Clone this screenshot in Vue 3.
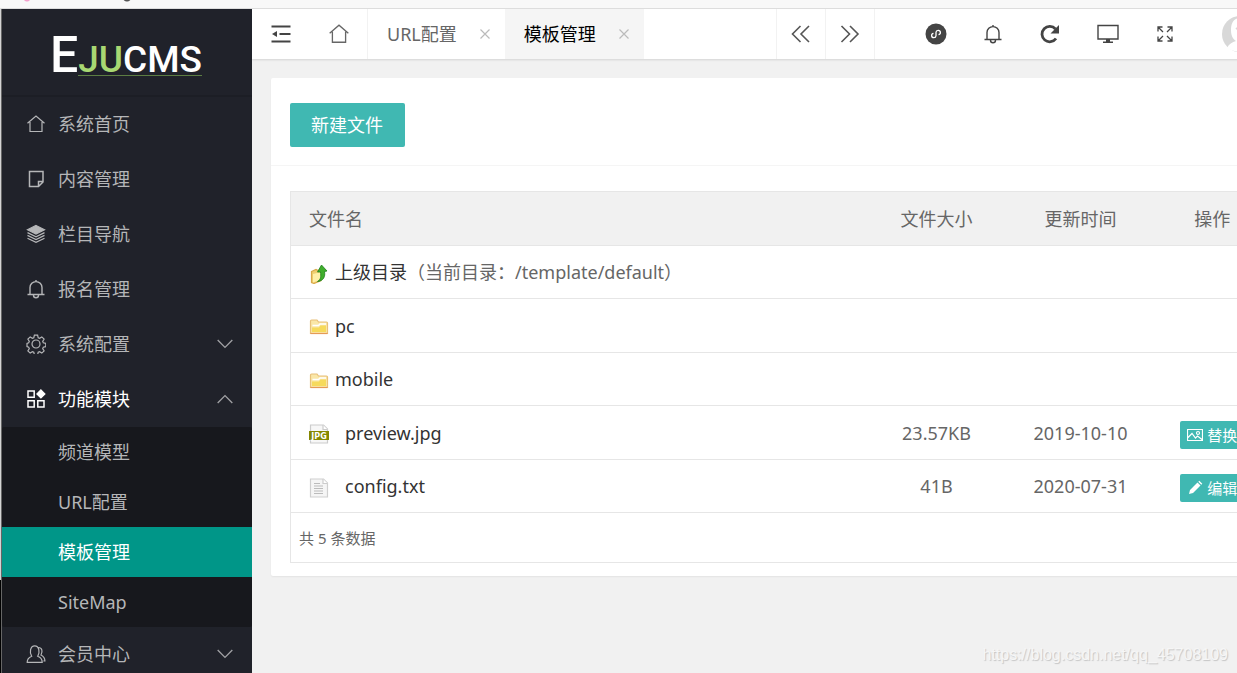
<script setup>
import { ref } from 'vue'

const icons = {
  home: '<path d="M1.500 9.300 10 2l8.500 7.300M4 8v9.500h12V8"/>',
  note: '<path d="M3.500 2.500h13.500v10.500l-4.500 4.500h-9zM12.500 17v-4.500h4.500" stroke-width="1.500"/>',
  layers: '<path d="M10 1.500 18.500 5.800 10 10 1.500 5.800z" fill="currentColor"/><path d="m1.500 8.600 8.500 4.200 8.500-4.200M1.500 11.400l8.500 4.200 8.500-4.200M1.500 14.200l8.500 4.200 8.500-4.200"/>',
  bell: '<path d="M4 15.200V8.600a6 6 0 0 1 12 0v6.600M1.500 15.500h17M10 2.500V1M7.500 16.200a2.500 2.500 0 0 0 5 0" stroke-width="1.400"/>',
  gear: '<circle cx="10" cy="10" r="4"/><path d="M8.400 1.200h3.200l.6 2.500 1.400.6 2.200-1.400 2.300 2.300-1.400 2.200.6 1.400 2.500.6v3.200l-2.500.6-.6 1.400 1.400 2.200-2.300 2.300-2.200-1.400-1.400.6-.6 2.500H8.400l-.6-2.500-1.400-.6-2.200 1.400-2.300-2.300 1.400-2.200-.6-1.400L1 12.600V9.400l1.700-.6.6-1.400-1.400-2.200 2.300-2.300 2.200 1.400 1.400-.6z"/>',
  modules: '<path d="M2 2h6.200v6.200H2zM2 11.800h6.200V18H2zM11.800 11.800H18V18h-6.200z" stroke-width="1.500"/><path d="M14.900.9l4 4-4 4-4-4z" fill="currentColor"/>',
  users: '<path d="M1.200 18.300c0-3.500 2-5 4.500-6C3.200 8.500 4.200 1.800 8.700 1.800s5.500 6.700 3 10.500c2.700 1 4.500 2.500 4.500 6zM12.500 3.500c3.500 0 4.500 4 2.500 7.500 2.500 1.200 3.900 2.800 3.900 6h-1.500"/>'
}

const menu = [
  { label: '系统首页', icon: 'home' },
  { label: '内容管理', icon: 'note' },
  { label: '栏目导航', icon: 'layers' },
  { label: '报名管理', icon: 'bell' },
  { label: '系统配置', icon: 'gear', fold: true },
  { label: '功能模块', icon: 'modules', fold: true, open: true, children: ['频道模型', 'URL配置', '模板管理', 'SiteMap'] },
  { label: '会员中心', icon: 'users', fold: true }
]
const current = ref('模板管理')
const tabs = ['URL配置', '模板管理']

const files = [
  { name: 'pc', kind: 'folder' },
  { name: 'mobile', kind: 'folder' },
  { name: 'preview.jpg', kind: 'jpg', size: '23.57KB', date: '2019-10-10', action: '替换' },
  { name: 'config.txt', kind: 'txt', size: '41B', date: '2020-07-31', action: '编辑' }
]
</script>

<template>
  <div class="page">
    <div class="browser-edge"></div>
    <div class="shell">
      <div class="window-edge"></div>
      <aside class="side">
        <a class="logo" href="#" aria-label="EJUCMS"><span class="big">E</span><span class="rest"><span class="green">JU</span>CMS</span></a>
        <nav>
          <template v-for="item in menu" :key="item.label">
            <a href="#" class="item" :class="{ open: item.open }">
              <svg class="ico" viewBox="0 0 20 20" v-html="icons[item.icon]"></svg>
              <span class="label">{{ item.label }}</span>
              <svg v-if="item.fold" class="arrow" viewBox="0 0 16 10"><path :d="item.open ? 'M1.500 8.500 8 2l6.500 6.500' : 'M1.500 1.500 8 8l6.500-6.500'" /></svg>
            </a>
            <div v-if="item.children" class="sub">
              <a v-for="c in item.children" :key="c" href="#" :class="{ on: c === current }" @click.prevent="current = c">{{ c }}</a>
            </div>
          </template>
        </nav>
      </aside>

      <div class="work">
        <header class="bar">
          <button class="cell" aria-label="折叠菜单">
            <svg class="i20" viewBox="0 0 20 20"><path d="M.5 2.500h19M8.500 10h11M.5 17.500h19" stroke-width="2.200" /><path d="M6 7v6L1 10z" fill="currentColor" stroke="none" /></svg>
          </button>
          <button class="cell home" aria-label="首页">
            <svg class="i22" viewBox="0 0 20 20" v-html="icons.home"></svg>
          </button>
          <div v-for="t in tabs" :key="t" class="tab" :class="{ active: t === current }">
            <a href="#">{{ t }}</a>
            <button :aria-label="'关闭' + t"><svg viewBox="0 0 10 10"><path d="M.5.5l9 9M9.500.5l-9 9" /></svg></button>
          </div>
          <div class="gap"></div>
          <button class="pager" aria-label="向左"><svg class="i20" viewBox="0 0 20 20"><path d="M9.500 2l-8 8 8 8M18 2l-8 8 8 8" stroke-width="1.600" /></svg></button>
          <button class="pager" aria-label="向右"><svg class="i20" viewBox="0 0 20 20"><path d="m1.500 2 8 8-8 8M10 2l8 8-8 8" stroke-width="1.600" /></svg></button>
          <div class="tools">
            <button aria-label="小程序"><svg class="i22" viewBox="0 0 22 22"><circle cx="11" cy="11" r="10.500" fill="currentColor" stroke="none" /><path d="M8.500 10.300a2.200 2.200 0 1 0 2.500 2.400V9.300a2.200 2.200 0 1 1 2.500 2.400" stroke="#fff" stroke-width="1.300" /></svg></button>
            <button aria-label="消息"><svg class="i20" viewBox="0 0 20 20" v-html="icons.bell"></svg></button>
            <button aria-label="刷新"><svg class="i20" viewBox="0 0 20 20"><path d="M16 14.500A7.700 7.700 0 1 1 15.500 5" stroke-width="2.800" /><path d="M19 1v8.500h-8.500z" fill="currentColor" stroke="none" /></svg></button>
            <button aria-label="前台"><svg class="i22" viewBox="0 0 22 22"><path d="M1 2.500h20v13.500H1z" stroke-width="1.400" /><path d="M9 16h4v2.500h3V20H6v-1.500h3z" fill="currentColor" stroke="none" /></svg></button>
            <button aria-label="全屏"><svg class="i18" viewBox="0 0 18 18"><path d="M2 6.500V2h4.500M2 2l5 5M11.500 2H16v4.500M16 2l-5 5M2 11.500V16h4.500M2 16l5-5M16 11.500V16h-4.500M16 16l-5-5" stroke-width="1.300" /></svg></button>
          </div>
          <button class="avatar" aria-label="账户"><svg viewBox="0 0 36 36"><circle cx="18" cy="18" r="18" fill="#d8d8d8" stroke="none" /><path d="M18 2C11 2 9 8 9 14c0 6 2 9 5 11-4 1-7 3-9 7 7 5 20 5 26 0-2-4-5-6-9-7 3-2 5-5 5-11 0-6-2-12-9-12z" fill="#fff" stroke="none" /><path d="M14 13l3-2 2 2" stroke="#d8d8d8" stroke-width="2" /></svg></button>
        </header>

        <main class="body">
          <section class="card">
            <div class="head"><button class="create">新建文件</button></div>
            <div class="content">
              <table>
                <colgroup><col /><col class="mid" /><col class="mid" /><col class="ops" /></colgroup>
                <thead><tr><th>文件名</th><th>文件大小</th><th>更新时间</th><th>操作</th></tr></thead>
                <tbody>
                  <tr>
                    <td>
                      <div class="file">
                        <svg class="fico" viewBox="0 0 20 20"><path d="M2.500 7.500 7 5.500l2 1 3-1v11L5 19.500l-2.500-1z" fill="#efcf70" stroke="#d9a94a" /><path d="M4 10 12 8v7.500l-8 3z" fill="#fff0a8" stroke="none" /><path d="M8.500 17.500c3.500-2 3.500-5 3-9.500H8.500L12.500 1l5.500 6-2.500.5c1 5-1 9.500-7 10z" fill="#3fae2c" stroke="#1c7f1b" stroke-width=".8" /></svg>
                        <a href="#">上级目录</a><span>（当前目录：/template/default）</span>
                      </div>
                    </td>
                    <td></td><td></td><td></td>
                  </tr>
                  <tr v-for="f in files" :key="f.name">
                    <td>
                      <div class="file" :class="{ leaf: f.size }">
                        <svg v-if="f.kind === 'folder'" class="fico" viewBox="0 0 20 20"><path d="M1.500 4q0-1 1-1H8l1.500 2h8q1 0 1 1v10.500h-17z" fill="#fae7a8" stroke="#e8c07a" /><path d="M3.500 8.500h6L11 7h6" stroke="#fff" stroke-width="1.500" /><path d="M3 10.500h7l1.500-2H17V15H3z" fill="#f6da5c" stroke="none" /><path d="M1.500 16.500h17" stroke="#e69a55" /></svg>
                        <svg v-else-if="f.kind === 'jpg'" class="fico" viewBox="0 0 20 20"><path d="M1.500 1h13l4 4v14h-17z" fill="#f7f7f7" stroke="#ccc" /><path d="M14 1v4.500h4.500" fill="#fff" stroke="#ccc" /><path d="M0 7h20v9H0z" fill="#858700" stroke="none" /><text x="10" y="14.500">JPG</text></svg>
                        <svg v-else class="fico" viewBox="0 0 20 20"><path d="M1.500 1h13l4 4v14h-17z" fill="#f5f5f5" stroke="#cfcfcf" /><path d="M14 1v4.500h4.500" fill="#fff" stroke="#ccc" /><path d="M5 5.500h6M5 8h9M5 10.500h9M5 13h9M5 15.500h9" stroke="#bbb" /></svg>
                        <a href="#">{{ f.name }}</a>
                      </div>
                    </td>
                    <td>{{ f.size }}</td>
                    <td>{{ f.date }}</td>
                    <td>
                      <button v-if="f.action" class="act">
                        <svg v-if="f.kind === 'jpg'" viewBox="0 0 16 16"><path d="M.5 2.500h15v11H.5zM.5 11 5 6.500l3.500 4.500 2-2 4.500 3.500" /><circle cx="11" cy="6" r="1.500" /></svg>
                        <svg v-else viewBox="0 0 16 16"><path d="M2 14l1-4 7.500-7.500 3 3L6 13zM11.300 1.700l1-1 3 3-1 1z" fill="currentColor" stroke="none" /></svg>
                        <span>{{ f.action }}</span>
                      </button>
                    </td>
                  </tr>
                </tbody>
                <tfoot><tr><td colspan="4">共 5 条数据</td></tr></tfoot>
              </table>
            </div>
          </section>
        </main>
        <div class="mark">https://blog.csdn.net/qq_45708109</div>
      </div>
    </div>
  </div>
</template>

<style>
body { background: #f1f1f1; }
</style>

<style scoped>
* { box-sizing: border-box; }
.page { height: 100vh; overflow: hidden; display: flex; flex-direction: column; font: 18px/24px "Noto Sans", "Noto Sans CJK SC", sans-serif; color: #666; }
.page :deep(svg) { fill: none; stroke: currentColor; stroke-width: 1.2; flex: none; display: block; }
a { color: inherit; text-decoration: none; }
button { font: inherit; color: inherit; border: 0; padding: 0; background: none; cursor: pointer; }
.browser-edge { flex: none; height: 9px; border-bottom: 1px solid #ddd; background: radial-gradient(circle at 27px -2px, #f3a0cc 3px, transparent 4px), radial-gradient(circle at 127px -3px, #555 4px, transparent 5px), #f8f8f8; }
.shell { flex: 1; min-height: 0; display: flex; }
.window-edge { flex: none; width: 2px; background: linear-gradient(#d4d4d4 86%, #000 86%); border-right: 1px solid #666; }

.side { flex: none; width: 250px; overflow: hidden; background: #20222a; color: #b5b6b8; }
.logo { display: flex; align-items: baseline; height: 88px; padding: 0 48px; border-bottom: 2px solid #1c1e25; color: #fff; font-family: Roboto, sans-serif; font-weight: 500; line-height: 92px; }
.big { font-size: 50px; }
.rest { font-size: 37px; line-height: 28px; border-bottom: 1px solid #5c7d43; height: 30px; }
.green { color: #a8d872; }
.item { display: flex; align-items: center; height: 55px; padding: 0 18px 2px 24px; }
.ico { width: 20px; height: 20px; }
.label { flex: 1; margin-left: 12px; }
.arrow { width: 18px; height: 12px; color: #a0a1a4; }
.item.open { color: #fff; }
.sub { background: #17181d; border-radius: 2px; }
.sub a { display: block; line-height: 50px; padding-left: 56px; }
.sub a.on { background: #009688; color: #fff; }

.work { flex: 1; min-width: 0; position: relative; overflow: hidden; }
.bar { display: flex; height: 50px; width: calc(100% + 48px); background: #fff; box-shadow: 0 1px 2px rgba(0, 0, 0, .12); color: #444; }
.bar button { display: flex; align-items: center; justify-content: center; }
.cell { flex: none; width: 58px; }
.home { border-right: 1px solid #f2f2f2; color: #666; }
.i18 { width: 18px; height: 18px; }
.i20 { width: 20px; height: 20px; }
.i22 { width: 22px; height: 22px; }
.tab { flex: none; display: flex; align-items: center; gap: 23px; padding: 0 15px 0 19px; color: #666; }
.tab.active { background: #f5f5f5; color: #000; }
.tab svg { width: 10px; height: 10px; color: #bbb; }
.gap { flex: 1; }
.pager { flex: none; width: 49px; border-left: 1px solid #f2f2f2; color: #555; }
.tools { flex: none; display: grid; grid-template-columns: repeat(5, 1fr); width: 320px; padding-left: 32px; border-left: 1px solid #f2f2f2; }
.avatar { flex: none; width: 91px; }
.avatar svg { width: 36px; height: 36px; }

.body { padding: 19px; width: calc(100% + 74px); }
.card { background: #fff; border-radius: 2px; box-shadow: 0 1px 2px rgba(0, 0, 0, .06); }
.head { padding: 25px 19px 18px; border-bottom: 1px solid #f5f5f5; }
.create { display: block; height: 44px; padding: 0 22px 0 21px; border-radius: 2px; background: #40b8b2; color: #fff; }
.content { padding: 25px 19px 13px; }
table { width: 100%; table-layout: fixed; border-collapse: collapse; border: 1px solid #e6e6e6; }
.mid { width: 144px; }
.ops { width: 120px; }
th, td { height: 53px; padding: 0; text-align: center; font-weight: 400; border-bottom: 1px solid #e6e6e6; }
th, tbody tr:nth-child(even) td { height: 54px; }
th { background: #f1f1f1; }
th:first-child { text-align: left; padding-left: 18px; }
.file { display: flex; align-items: center; padding-left: 18px; white-space: nowrap; }
.file a { color: #333; margin-left: 6px; }
.leaf a { margin-left: 16px; }
.fico { width: 20px; height: 20px; margin-top: 3px; }
.fico text { font: 700 8px "DejaVu Sans", sans-serif; fill: #fff; stroke: none; text-anchor: middle; }
.act { display: inline-flex; align-items: center; gap: 4px; height: 28px; padding: 0 7px; margin-top: 4px; border-radius: 2px; background: #40b8b2; color: #fff; font-size: 15px; vertical-align: middle; }
.act svg { width: 16px; height: 16px; }
tfoot td { height: 50px; text-align: left; padding-left: 8px; font-size: 15px; }
.mark { position: absolute; right: 9px; bottom: 6px; font: 16px/24px "Liberation Sans", sans-serif; color: #f6f6f6; text-shadow: 1px 1px 1px #c4c4c4; }
</style>
